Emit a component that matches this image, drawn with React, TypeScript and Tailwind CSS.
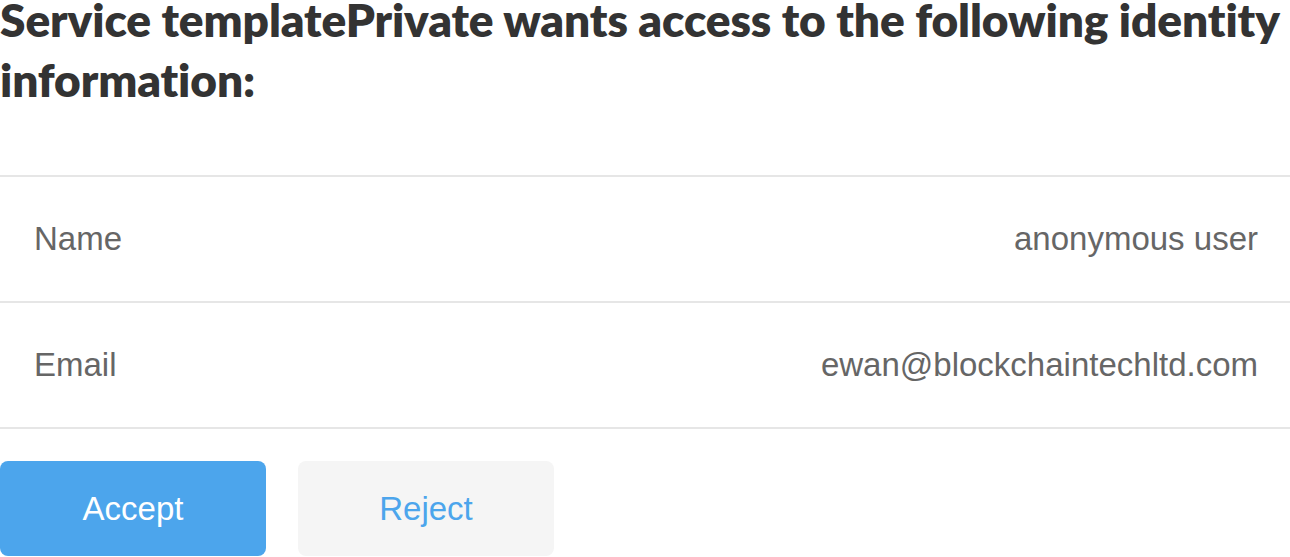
import React from "react";

const fields = [
  { label: "Name", value: "anonymous user" },
  { label: "Email", value: "ewan@blockchaintechltd.com" },
];

export default function App() {
  return (
    <div className="w-[1290px] h-[557px] overflow-hidden bg-white">
      <h1 className="flex flex-col gap-[20px] font-['Lato',sans-serif] font-extrabold text-[46px] text-[#333333] tracking-[-0.1px] [font-variant-ligatures:none] whitespace-nowrap">
        <span className="leading-[40px]">
          Service templatePrivate wants access to the following identity
        </span>
        <span className="leading-[40px]">information:</span>
      </h1>

      <div className="mt-[75px] font-['Liberation_Sans',Arial,sans-serif] text-[33px] text-[#666666]">
        {fields.map((f) => (
          <div
            key={f.label}
            className="flex items-center justify-between h-[126px] border-t-2 border-[#e6e6e6] pl-[34px] pr-[32px]"
          >
            <span>{f.label}</span>
            <span>{f.value}</span>
          </div>
        ))}
        <div className="border-t-2 border-[#e6e6e6]" />
      </div>

      {/* actions */}
      <div className="flex gap-[32px] mt-[32px] font-['Liberation_Sans',Arial,sans-serif] text-[33px]">
        <button className="w-[266px] h-[95px] rounded-[8px] bg-[#4ca5ec] text-white">
          Accept
        </button>
        <button className="w-[256px] h-[95px] rounded-[8px] bg-[#f5f5f5] text-[#4ca5ec]">
          Reject
        </button>
      </div>
    </div>
  );
}
